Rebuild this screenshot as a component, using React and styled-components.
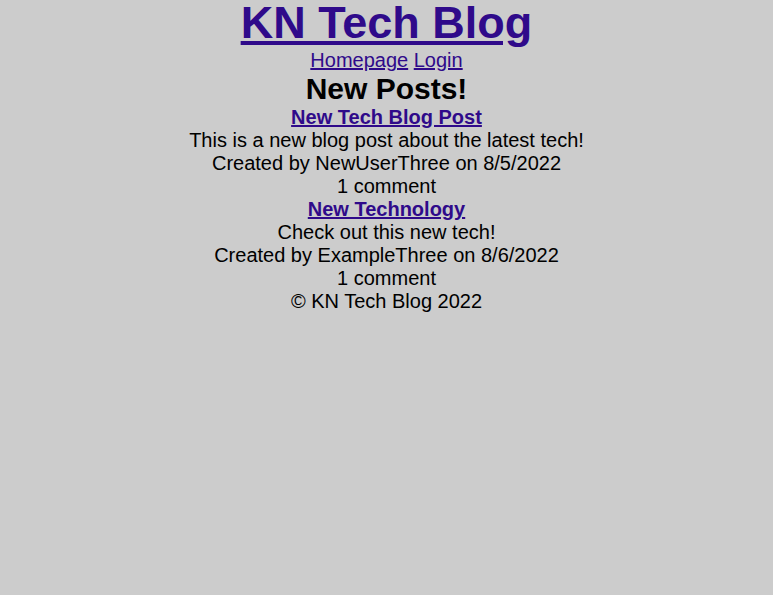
import React from 'react'
import styled, { createGlobalStyle } from 'styled-components'

const GlobalStyle = createGlobalStyle`
  html, body {
    margin: 0;
    padding: 0;
    background: #cccccc;
  }
  body {
    font-family: "Liberation Sans", Arial, sans-serif;
    font-size: 20px;
    color: #000;
  }
`

const posts = [
  {
    title: 'New Tech Blog Post',
    body: 'This is a new blog post about the latest tech!',
    author: 'NewUserThree',
    date: '8/5/2022',
    comments: 1,
  },
  {
    title: 'New Technology',
    body: 'Check out this new tech!',
    author: 'ExampleThree',
    date: '8/6/2022',
    comments: 1,
  },
]

const App = () => {
  return (
    <>
      <GlobalStyle />
      <Page>
        <Header>
          <SiteTitle>
            <TitleLink href="#">KN Tech Blog</TitleLink>
          </SiteTitle>
          <Nav>
            <NavLink href="#">Homepage</NavLink> <NavLink href="#">Login</NavLink>
          </Nav>
        </Header>
        <Main>
          <SectionTitle>New Posts!</SectionTitle>
          {posts.map(post => (
            <Post key={post.title}>
              <PostTitle href="#">{post.title}</PostTitle>
              <Line>{post.body}</Line>
              <Line>
                Created by {post.author} on {post.date}
              </Line>
              <Line>
                {post.comments} {post.comments === 1 ? 'comment' : 'comments'}
              </Line>
            </Post>
          ))}
        </Main>
        <Footer>© KN Tech Blog 2022</Footer>
      </Page>
    </>
  )
}

export default App

const linkColor = '#2f0a8a'

const Page = styled.div`
  display: flex;
  flex-direction: column;
  padding-top: 2px;
  text-align: center;
`

const Header = styled.header`
  display: flex;
  flex-direction: column;
`

const SiteTitle = styled.h1`
  margin: 0 0 6px;
  font-size: 45px;
  font-weight: bold;
  line-height: 41px;
`

const TitleLink = styled.a`
  color: ${linkColor};
  text-decoration: underline;
`

const Nav = styled.nav`
  line-height: 23px;
`

const NavLink = styled.a`
  color: ${linkColor};
  text-decoration: underline;
`

const Main = styled.main`
  display: flex;
  flex-direction: column;
`

const SectionTitle = styled.h2`
  margin: 0;
  font-size: 30px;
  font-weight: bold;
  line-height: normal;
`

const Post = styled.div`
  display: flex;
  flex-direction: column;
  align-items: center;
`

const PostTitle = styled.a`
  display: block;
  line-height: 23px;
  font-size: 20px;
  font-weight: bold;
  color: ${linkColor};
  text-decoration: underline;
`

const Line = styled.div`
  line-height: 23px;
`

const Footer = styled.footer`
  line-height: 23px;
`
